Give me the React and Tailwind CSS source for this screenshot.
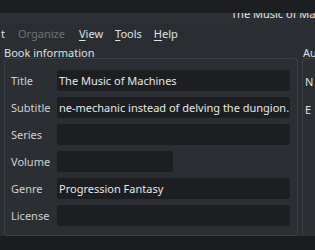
const fields = [
  { label: 'Title', value: 'The Music of Machines' },
  { label: 'Subtitle', value: 'ne-mechanic instead of delving the dungion.' },
  { label: 'Series', value: '' },
  { label: 'Volume', value: '', short: true },
  { label: 'Genre', value: 'Progression Fantasy' },
  { label: 'License', value: '' },
]

const App = () => {
  return (
    <div
      className="w-[315px] h-[250px] overflow-hidden bg-[#2a2e32] text-[11px] leading-[11px] text-[#dfe1e3] flex flex-col"
      style={{ fontFamily: '"Noto Sans", sans-serif' }}
    >
      {/* window title bar */}
      <div className="h-[13px] bg-[#1c1e21] shrink-0" />
      <div className="h-[10px] shrink-0 overflow-hidden bg-[#2c3035]">
        <div className="pl-[231px] -mt-[5px] whitespace-nowrap text-[#e4e6e8]">The Music of Machines</div>
      </div>

      {/* menu bar */}
      <div className="h-[20px] shrink-0 flex items-center pt-[1px] whitespace-nowrap">
        <span className="ml-[1px]">t</span>
        <span className="ml-[13px] text-[#6e7276]">Organize</span>
        <span className="ml-[14px]"><u className="underline-offset-2">V</u>iew</span>
        <span className="ml-[12px]"><u className="underline-offset-2">T</u>ools</span>
        <span className="ml-[12px]"><u className="underline-offset-2">H</u>elp</span>
      </div>

      {/* content */}
      <div className="flex-1 flex pt-[4px] min-h-0">
        <div className="w-[298px] shrink-0 pl-[4px] flex flex-col">
          <div className="h-[11px] whitespace-nowrap text-[#dfe1e3]">Book information</div>
          <div className="mt-[0px] flex-1 border border-[#3a3f44] rounded-[3px] bg-[#2b2f33] pl-[6px] pr-[6px] pt-[11px] flex flex-col gap-[6px]">
            {fields.map((f) => (
              <div key={f.label} className="flex items-center h-[21px]">
                <span className="w-[46px] shrink-0 text-[#cfd1d3]">{f.label}</span>
                <div
                  className={`h-[21px] rounded-[3px] bg-[#1c1e21] flex items-center pl-[2px] overflow-hidden whitespace-nowrap text-[#e6e7e8] ${f.short ? 'w-[116px]' : 'w-[233px]'}`}
                >
                  {f.value}
                </div>
              </div>
            ))}
          </div>
        </div>
        <div className="flex-1 pl-[4px] flex flex-col">
          <div className="h-[11px] pl-[1px] whitespace-nowrap">Au</div>
          <div className="flex-1 border-l border-t border-[#3a3f44] rounded-tl-[3px] bg-[#2b2f33] pl-[2px] pt-[17px] flex flex-col gap-[17px]">
            <span>N</span>
            <span>E</span>
          </div>
        </div>
      </div>

      <div className="h-[14px] shrink-0 bg-[#1b1c1f]" />
    </div>
  )
}

export default App
